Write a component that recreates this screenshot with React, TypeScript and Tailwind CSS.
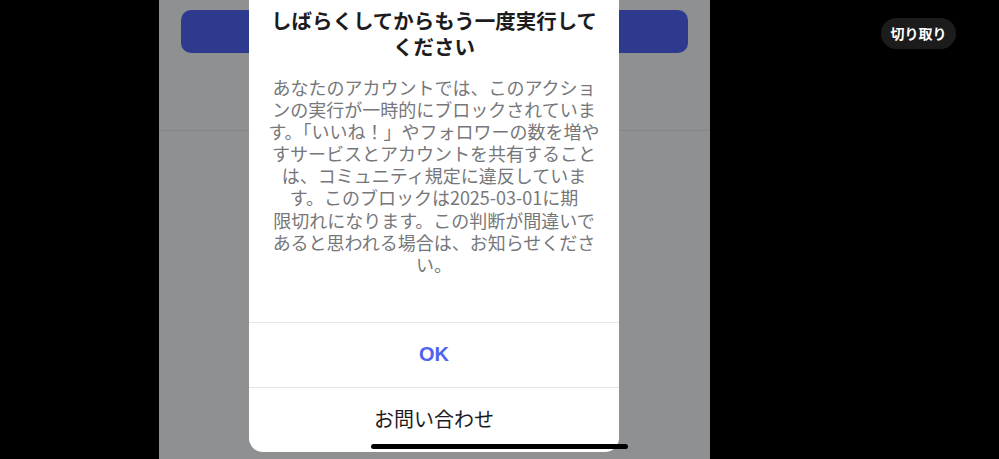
const jp = '"Noto Sans CJK JP", "Noto Sans", sans-serif';

const bodyLines = [
  "あなたのアカウントでは、このアクショ",
  "ンの実行が一時的にブロックされていま",
  "す。「いいね！」やフォロワーの数を増や",
  "すサービスとアカウントを共有すること",
  "は、コミュニティ規定に違反していま",
  "す。このブロックは2025-03-01に期",
  "限切れになります。この判断が間違いで",
  "あると思われる場合は、お知らせくださ",
  "い。",
];

export default function App() {
  return (
    <div className="flex h-[459px] w-[999px] overflow-hidden bg-black" style={{ fontFamily: jp }}>
      <div className="relative ml-[159px] h-full w-[551px] shrink-0 overflow-hidden bg-[#8f9092]">
        {/* dimmed page behind the dialog */}
        <div className="mx-[22px] mt-[10px] h-[43px] rounded-[10px] bg-[#2e3a8e]" />
        <div className="mt-[77px] h-px bg-[#858688]" />

        {/* dialog */}
        <div className="absolute left-[90px] top-0 flex h-[452px] w-[370px] flex-col rounded-b-[14px] bg-white">
          <h2 className="px-4 pt-[7px] text-center text-[20.5px] font-bold leading-[26px] text-[#1c1c1e]">
            しばらくしてからもう一度実行して
            <br />
            ください
          </h2>
          <p className="mt-[17px] text-center text-[18px] leading-[22.1px] text-[#76777a]">
            {bodyLines.map((l, i) => (
              <span key={i} className="block whitespace-nowrap">
                {l}
              </span>
            ))}
          </p>
          <div className="mt-auto flex h-[65px] items-center justify-center border-t border-[#e6e6e8] pb-[3px]">
            <span
              className="text-[20px] font-bold text-[#5062ee]"
              style={{ fontFamily: '"Liberation Sans", Arial, sans-serif' }}
            >
              OK
            </span>
          </div>
          <div className="flex h-[65px] items-center justify-center border-t border-[#e6e6e8] pb-[3px]">
            <span className="text-[20px] text-[#1c1c1e]">お問い合わせ</span>
          </div>
        </div>

        {/* home indicator */}
        <div className="absolute left-[212px] top-[444px] h-[5px] w-[257px] rounded-full bg-black" />
      </div>

      <div className="flex-1 pl-[171px] pt-[18px]">
        <div className="flex h-[31px] w-[75px] items-center justify-center rounded-full bg-[#1c1c1c] text-[14px] font-semibold text-white">
          切り取り
        </div>
      </div>
    </div>
  );
}
